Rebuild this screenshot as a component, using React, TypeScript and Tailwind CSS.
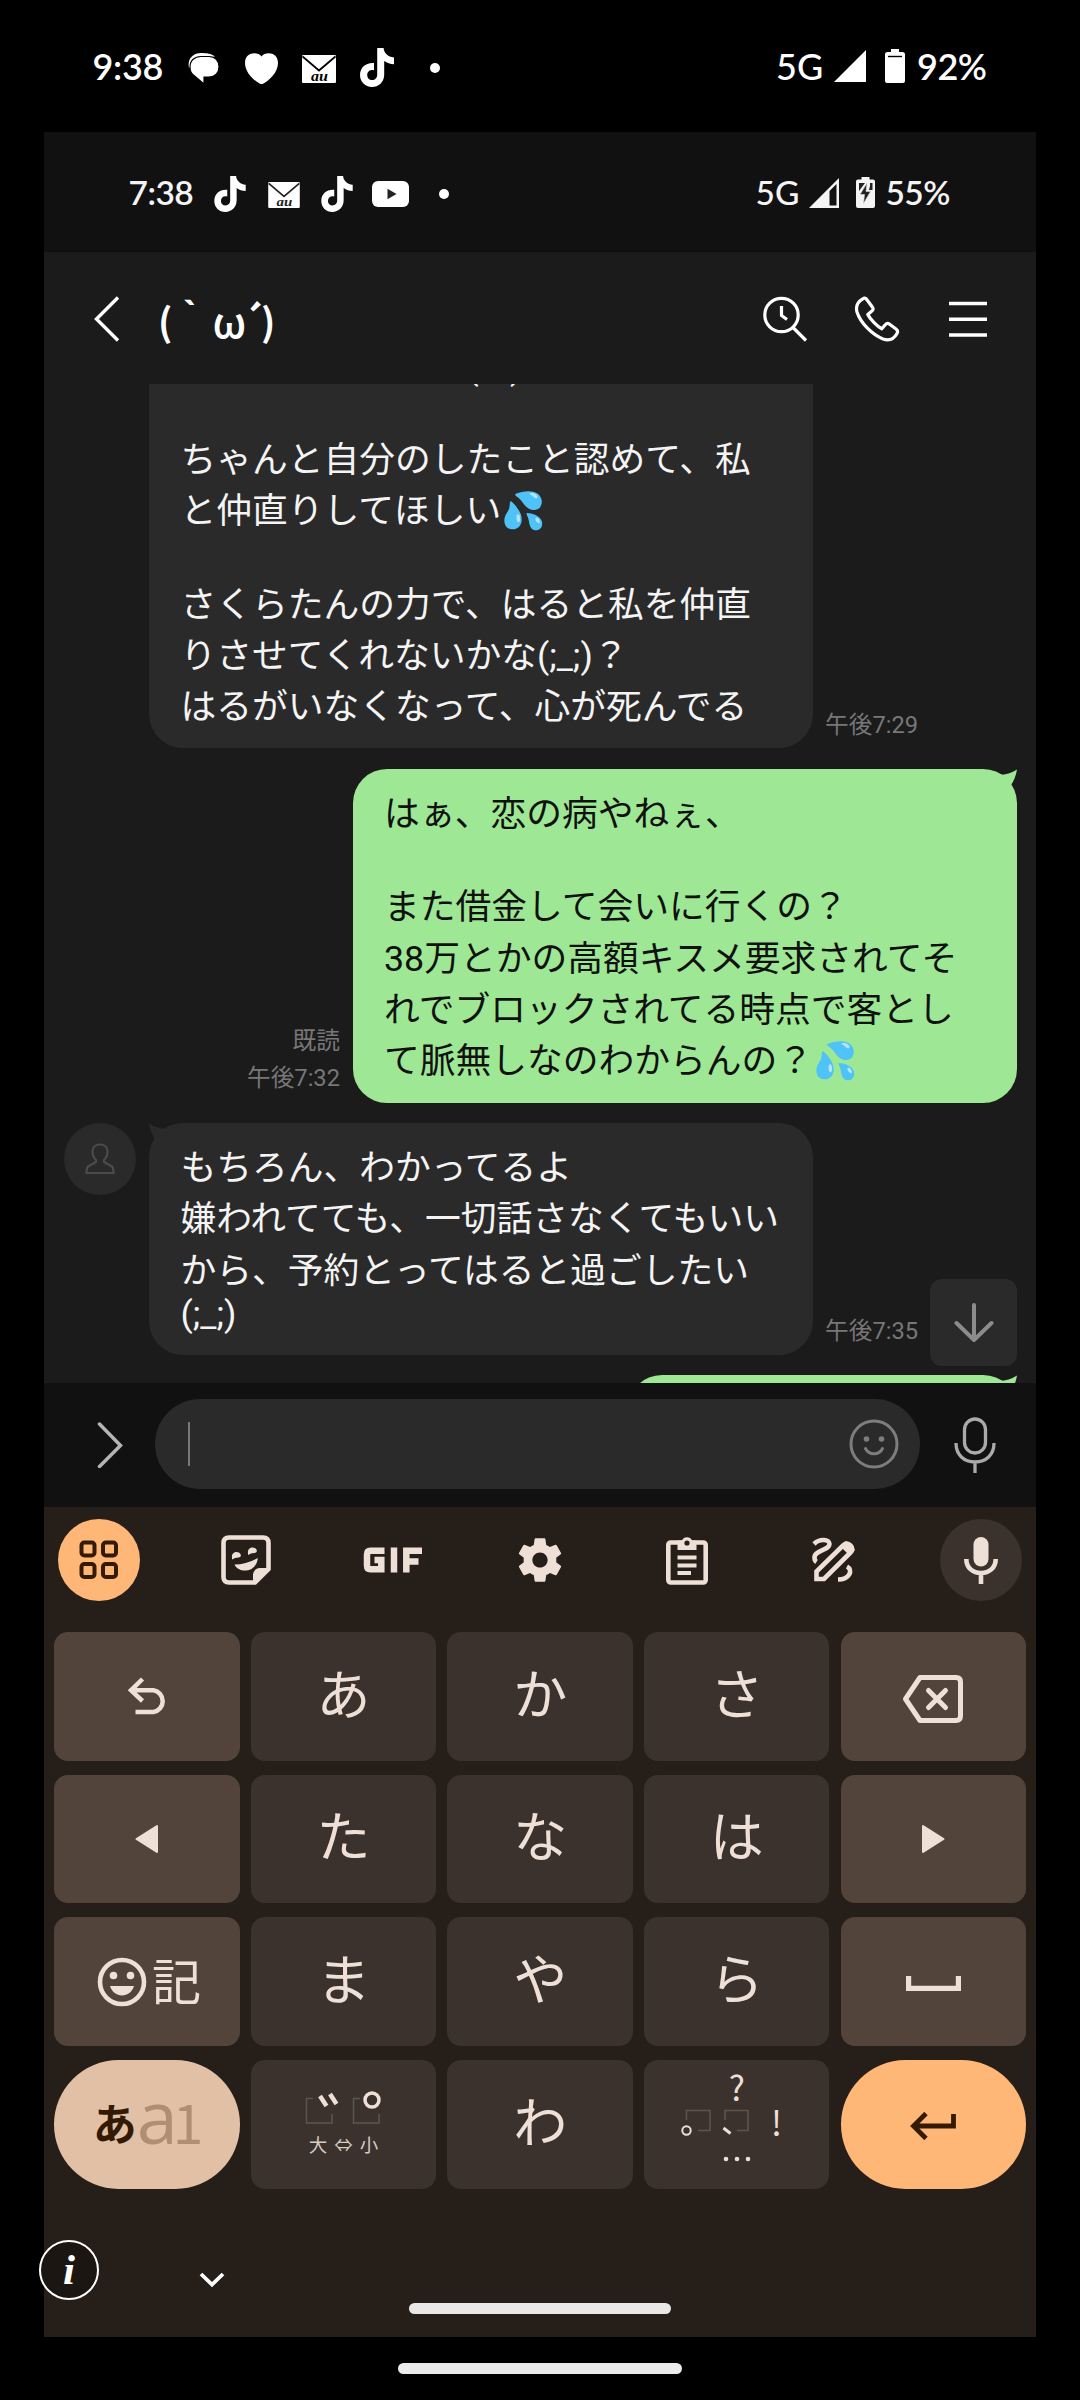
import React from "react";

type Box = { className?: string };

const TikTok = ({ className }: Box) => (
  <svg viewBox="0 0 34 39" className={className} fill="#fff">
    <path d="M17.2 0H23.6C24 4.8 27.6 9 34 9.4V16.2C30.2 16.2 27 15 24.2 13V26.4C24.2 34 18.6 39 12 39C5.200 39 0 33.800 0 27C0 19.400 6 14.300 14 15V22.200C10 21.200 7.200 23.600 7.200 27C7.200 30 9.400 32 12 32C15.200 32 17.200 29.800 17.200 26.400Z" />
  </svg>
);

const Mail = ({ className, line }: Box & { line: string }) => (
  <svg viewBox="0 0 34 28" className={className}>
    <rect width="34" height="28" rx="1.200" fill="#fff" />
    <path d="M0.500 1.500L17 15.500L33.500 1.500" fill="none" stroke={line} strokeWidth="1.800" />
    <text x="17.500" y="26" textAnchor="middle" fontSize="14" fontStyle="italic" fontWeight="700" fontFamily="Liberation Serif, serif" fill={line} textLength="17" lengthAdjust="spacingAndGlyphs">au</text>
  </svg>
);

function OuterStatus() {
  return (
    <div className="flex h-[132px] items-center font-[Lato,sans-serif] text-[36px] font-semibold text-white">
      <span className="ml-[92.500px] w-[72.500px] leading-[40px] tracking-[-0.3px]">9:38</span>
      <svg viewBox="0 0 32 31" className="ml-[23px] mt-[5px] h-[31px] w-[32px]">
        <path d="M1 15C-1 6 5 0 13 0C19 0 23 0.500 27 3.500L10 6Z" fill="#fff" />
        <path d="M13 3.500H21C27 3.500 31 7.500 31 13.800C31 20 27 24 21 24H16V31L6 22.500C3 20.500 2 17.500 2 14C2 7.500 6.500 3.500 13 3.500Z" fill="#fff" stroke="#000" strokeWidth="1.200" />
      </svg>
      <svg viewBox="0 0 33 31" className="ml-[24.500px] mt-[5px] h-[31px] w-[33px]" fill="#fff">
        <path d="M16.500 3.500C20-1.500 33-1.500 33 10C33 19.500 24 28 16.500 31.500C9 28 0 19.500 0 10C0-1.500 13-1.500 16.500 3.500Z" />
      </svg>
      <Mail line="#000" className="ml-[24.500px] mt-[6px] h-[28px] w-[34px]" />
      <TikTok className="ml-[24px] mt-[3px] h-[39px] w-[34px]" />
      <span className="ml-[36px] mt-[4px] size-[10px] rounded-full bg-white" />
      <span className="ml-[336px] w-[50px] font-medium leading-[40px]">5G</span>
      <svg viewBox="0 0 32 32" className="ml-[8px] h-[32px] w-[32px]" fill="#fff"><path d="M0 32L32 0V32Z" /></svg>
      <svg viewBox="0 0 20 34" className="ml-[19px] mt-[-1px] h-[34px] w-[20px]">
        <path d="M6 0H14V3H17.500A2.500 2.500 0 0 1 20 5.500V32A2 2 0 0 1 18 34H2A2 2 0 0 1 0 32V5.500A2.500 2.500 0 0 1 2.500 3H6Z" fill="#fff" />
        <path d="M3 7.500H17" stroke="#000" strokeWidth="1.400" />
      </svg>
      <span className="ml-[12px] leading-[40px] tracking-[-0.5px]">92%</span>
    </div>
  );
}

function InnerStatus() {
  return (
    <div className="flex h-[121px] items-center border-b border-[#181818] bg-[#111] font-[Lato,sans-serif] text-[33.500px] font-semibold text-[#f4f4f4]">
      <span className="ml-[84.500px] w-[66.500px] leading-[40px] tracking-[-0.5px]">7:38</span>
      <TikTok className="ml-[19px] mt-[3px] h-[36px] w-[32px]" />
      <Mail line="#222" className="ml-[22px] mt-[6px] h-[26px] w-[32px]" />
      <TikTok className="ml-[21px] mt-[3px] h-[36px] w-[32px]" />
      <svg viewBox="0 0 37 26" className="ml-[19px] mt-[4px] h-[26px] w-[37px]">
        <rect width="37" height="26" rx="6" fill="#fff" />
        <path d="M15.500 7.800L24.500 13L15.500 18.200Z" fill="#222" />
      </svg>
      <span className="ml-[30px] mt-[4px] size-[10px] rounded-full bg-white" />
      <span className="ml-[306.500px] w-[47px] font-medium leading-[40px]">5G</span>
      <svg viewBox="0 0 30 30" className="ml-[6px] mt-[2px] size-[30px]" fill="none">
        <path d="M0 30L30 0V30Z" fill="#f4f4f4" />
        <path d="M20.500 13L27.500 6V27.500H20.500Z" fill="#111" />
      </svg>
      <svg viewBox="0 0 19 31" className="ml-[17px] h-[31px] w-[19px]">
        <path d="M5.500 0H13.500V2.500H17A2 2 0 0 1 19 4.500V29A2 2 0 0 1 17 31H2A2 2 0 0 1 0 29V4.500A2 2 0 0 1 2 2.500H5.500Z" fill="#f4f4f4" />
        <path d="M3 6H9L3 14ZM14 6H16.500V13H13L14 9Z" fill="#222" />
        <path d="M11 6L4 17.500H8.500L7.500 26.500L14.500 14.500H10Z" fill="#222" stroke="#ddd" strokeWidth=".6" />
      </svg>
      <span className="ml-[11px] leading-[40px] tracking-[-0.6px]">55%</span>
    </div>
  );
}

function Header() {
  return (
    <header className="flex h-[131px] items-center bg-[#1b1b1b] text-white">
      <svg viewBox="0 0 26 46" className="ml-[50px] h-[46px] w-[26px]" fill="none" stroke="#fff" strokeWidth="3.400"><path d="M24 1.500L2.500 23L24 44.500" /></svg>
      <h1 className="ml-[38px] mt-[3px] flex w-[558px] whitespace-nowrap font-['Noto_Sans_CJK_JP',sans-serif] text-[38px] font-bold leading-[56px]">
        <span>(｀</span>
        <span className="ml-[2px] text-[42px] font-medium tracking-[-5px]">ω</span>
        <span className="tracking-[-4px]">´)</span>
      </h1>
      <svg viewBox="0 0 44 46" className="ml-[46px] size-[46px]" fill="none" stroke="#fff" strokeWidth="3.200">
        <circle cx="18.500" cy="19" r="16.700" />
        <path d="M18.500 10V19.500L24 23.500M29.500 31L43 44.500" />
      </svg>
      <svg viewBox="0 0 46 46" className="ml-[46px] size-[46px]" fill="none" stroke="#fff" strokeWidth="3.200" strokeLinejoin="round">
        <path d="M8.300 3.200C11 1.200 12 2.500 13.300 4.300L18.500 11.300C19.800 13.200 19.300 14 17.300 15.500L13.800 18.500C16 23 23 30.500 27.800 32.800L31.500 28.500C32.800 27 34 27 35.300 28L42 33C43.800 34.300 44 35.800 43 37.500C39.500 43.800 34.500 45 29 43C18 38.500 6.500 27 3 16C1.500 10.500 3 6.500 8.300 3.200Z" />
      </svg>
      <svg viewBox="0 0 38 38" className="ml-[49px] size-[38px]" stroke="#fff" strokeWidth="3.500"><path d="M0 3.500H38M0 19.300H38M0 35H38" /></svg>
    </header>
  );
}

const Line = ({ children, latin = false }: { children?: React.ReactNode; latin?: boolean }) => (
  <p className={latin ? "h-[42px] shrink-0 whitespace-nowrap leading-[35px]" : "h-[51.300px] shrink-0 whitespace-nowrap leading-[51.300px]"}>{children}</p>
);

const bubbleText = "font-[Roboto,'Noto_Sans_CJK_JP','Noto_Color_Emoji',sans-serif] text-[35.750px]";
const stamp = "whitespace-nowrap font-[Roboto,'Noto_Sans_CJK_JP',sans-serif] text-[23.700px] leading-[37px] text-[#777]";

const GreenTail = () => (
  <svg viewBox="0 0 24 24" className="absolute right-0 top-0 size-[24px]"><path d="M2 5.500Q14 7 24 0.500Q22.500 10 17 17.500L6 22Z" fill="#9ee895" /></svg>
);

function Chat() {
  return (
    <main className="relative flex h-[999px] flex-col overflow-hidden bg-[#1b1b1b]">
      <div className="ml-[105px] flex h-[364px] shrink-0 items-end">
        <div className={`${bubbleText} flex h-[364px] w-[664px] flex-col justify-end overflow-hidden rounded-b-[34px] bg-[#2a2a2a] pb-[14.500px] pl-[31.500px] text-[#f4f4f4]`}>
          <Line><span className="pl-[286px]">(;_;)</span></Line>
          <Line latin />
          <Line>ちゃんと自分のしたこと認めて、私</Line>
          <Line>と仲直りしてほしい💦</Line>
          <Line latin />
          <Line>さくらたんの力で、はると私を仲直</Line>
          <Line>りさせてくれないかな(;_;)？</Line>
          <Line>はるがいなくなって、心が死んでる</Line>
        </div>
        <span className={`${stamp} mb-[4px] ml-[12px]`}>午後7:29</span>
      </div>

      <div className="mr-[19px] mt-[21px] flex shrink-0 items-end justify-end">
        <div className={`${stamp} mb-[6px] mr-[12.500px] text-right`}><div>既読</div><div>午後7:32</div></div>
        <div className={`${bubbleText} relative h-[334px] w-[664.500px] rounded-[34px] bg-[#9ee895] pl-[31.500px] pt-[20px] text-[#111]`}>
          <GreenTail />
          <Line>はぁ、恋の病やねぇ、</Line>
          <Line latin />
          <Line>また借金して会いに行くの？</Line>
          <Line>38万とかの高額キスメ要求されてそ</Line>
          <Line>れでブロックされてる時点で客とし</Line>
          <Line>て脈無しなのわからんの？💦</Line>
        </div>
      </div>

      <div className="ml-[19.500px] mt-[20px] flex h-[231.500px] shrink-0">
        <span className="flex size-[72px] items-center justify-center rounded-full bg-[#2a2a2a]">
          <svg viewBox="0 0 30 32" className="h-[32px] w-[30px]" fill="none" stroke="#4c4c4c" strokeWidth="2.200" strokeLinejoin="round">
            <path d="M11 17C8 14 7.500 11 7.500 8.500C7.500 4.500 10.500 1.500 15 1.500S22.500 4.500 22.500 8.500C22.500 11 22 14 19 17V19L27 23.500C28.500 25 28.500 27 28.500 30H1.500C1.500 27 1.500 25 3 23.500L11 19Z" />
          </svg>
        </span>
        <div className={`${bubbleText} relative ml-[13.500px] w-[664px] rounded-[34px] bg-[#2a2a2a] pl-[31.500px] pt-[20px] text-[#f4f4f4]`}>
          <svg viewBox="0 0 24 24" className="absolute left-0 top-0 size-[24px]"><path d="M22 5.500Q10 7 0 0.500Q1.500 10 7 17.500L18 22Z" fill="#2a2a2a" /></svg>
          <Line>もちろん、わかってるよ</Line>
          <Line>嫌われてても、一切話さなくてもいい</Line>
          <Line>から、予約とってはると過ごしたい</Line>
          <Line latin>(;_;)</Line>
        </div>
        <span className={`${stamp} mb-[5px] ml-[12px] self-end`}>午後7:35</span>
      </div>

      <div className="relative ml-[584px] mt-[20.500px] h-[80px] w-[389px] shrink-0 rounded-[34px] bg-[#9ee895]"><GreenTail /></div>

      <button className="absolute bottom-[17px] right-[19px] flex size-[87px] items-center justify-center rounded-[12px] bg-[#2a2a2a]">
        <svg viewBox="0 0 40 40" className="size-[40px]" fill="none" stroke="#8c8c8c" strokeWidth="4" strokeLinecap="round" strokeLinejoin="round"><path d="M20 2V37M2.500 20L20 37L37.500 20" /></svg>
      </button>
    </main>
  );
}

function InputBar() {
  return (
    <div className="flex h-[123.500px] items-center bg-[#111]">
      <svg viewBox="0 0 26 46" className="ml-[53px] h-[46px] w-[26px]" fill="none" stroke="#b4b4b4" strokeWidth="3.500" strokeLinecap="round"><path d="M2.500 2L23.500 23.500L2.500 44.500" /></svg>
      <div className="ml-[32px] mt-[-2px] flex h-[90px] w-[764.500px] items-center rounded-full bg-[#2a2a2a] pl-[33px] pr-[21px]">
        <span className="h-[44px] w-[2px] bg-[#777]" />
        <svg viewBox="0 0 50 50" className="ml-auto size-[50px]" fill="none" stroke="#7d7d7d" strokeWidth="3" strokeLinecap="round">
          <circle cx="25" cy="25" r="23" /><path d="M16.500 29.500C20 36.500 30 36.500 33.500 29.500" />
          <g fill="#7d7d7d" stroke="none"><circle cx="17.500" cy="20" r="2.800" /><circle cx="32.500" cy="20" r="2.800" /></g>
        </svg>
      </div>
      <svg viewBox="0 0 42 56" className="ml-[34.500px] h-[56px] w-[42px]" fill="none" stroke="#aaa" strokeWidth="3.300">
        <rect x="10.500" y="2" width="21" height="34" rx="10.500" />
        <path d="M2 26C2 38 10 45 21 45S40 38 40 26M21 45V56" />
      </svg>
    </div>
  );
}

const ink = "#efe0d7";

function Toolbar() {
  return (
    <div className="flex h-[82px] items-center justify-between pl-[13.500px] pr-[14.500px]">
      <span className="flex size-[82px] items-center justify-center rounded-full bg-[#ffb777]">
        <svg viewBox="0 0 40 40" className="size-[40px]" fill="none" stroke="#351a02" strokeWidth="4">
          <rect x="2.500" y="2.500" width="13" height="13" rx="2.800" /><rect x="24" y="2.500" width="13" height="13" rx="2.800" />
          <rect x="2.500" y="24" width="13" height="13" rx="2.800" /><rect x="24" y="24" width="13" height="13" rx="2.800" />
        </svg>
      </span>
      <span className="flex size-[82px] items-center justify-center">
        <svg viewBox="0 0 50 50" className="size-[50px]" fill={ink}>
          <path d="M8 2.500H42Q47.500 2.500 47.500 8V34L34 47.500H8Q2.500 47.500 2.500 42V8Q2.500 2.500 8 2.500Z" fill="none" stroke={ink} strokeWidth="4.600" />
          <path d="M32 48V39Q33 33.500 39 33H48L35 48Z" />
          <path d="M11 22.500A4.600 4.600 0 0 1 20 20.500Q19.500 22.300 17.500 22.500Q14 22.500 11 24.500ZM27 18A4.600 4.600 0 0 1 36 16Q35.500 18 33 18Q30 18 27 20Z" />
          <path d="M13.500 29.500Q26 29.500 36.800 23C36.500 30 31 35 25.500 35.500C20.500 36 15.500 34 13.500 29.500Z" />
        </svg>
      </span>
      <span className="flex size-[82px] items-center justify-center">
        <svg viewBox="0 0 60 26" className="h-[26px] w-[60px]" fill="none" stroke={ink} strokeWidth="6.500">
          <path d="M21.500 3.800H7.500Q4 3.800 4 7.500V18.500Q4 22.300 7.500 22.300H18.300V13H11.500" /><path d="M31 0.500V25.500" /><path d="M59 3.800H43.300V25.500M43.300 14.500H55.500" />
        </svg>
      </span>
      <span className="flex size-[82px] items-center justify-center">
        <svg viewBox="1.900 2 20.200 20" className="size-[44px]" fill={ink}>
          <path d="M19.430 12.980c.04-.32.07-.64.07-.98s-.03-.66-.07-.98l2.110-1.650c.19-.15.24-.42.12-.64l-2-3.460c-.12-.22-.39-.3-.61-.22l-2.490 1c-.52-.4-1.080-.73-1.690-.98l-.38-2.650C14.460 2.180 14.250 2 14 2h-4c-.25 0-.46.18-.49.42l-.38 2.650c-.61.25-1.170.59-1.690.98l-2.490-1c-.23-.09-.49 0-.61.22l-2 3.460c-.13.22-.07.49.12.64l2.110 1.650c-.04.32-.07.65-.07.98s.03.66.07.98l-2.110 1.650c-.19.15-.24.42-.12.64l2 3.460c.12.22.39.3.61.22l2.490-1c.52.4 1.080.73 1.690.98l.38 2.650c.03.24.24.42.49.42h4c.25 0 .46-.18.49-.42l.38-2.650c.61-.25 1.170-.59 1.690-.98l2.490 1c.23.09.49 0 .61-.22l2-3.460c.12-.22.07-.49-.12-.64l-2.110-1.650zM12 15.500c-1.930 0-3.500-1.570-3.500-3.500s1.570-3.500 3.500-3.500 3.500 1.570 3.500 3.500-1.570 3.500-3.500 3.500z" />
        </svg>
      </span>
      <span className="flex size-[82px] items-center justify-center">
        <svg viewBox="0 0 42 50" className="h-[50px] w-[42px]" fill="none" stroke={ink} strokeWidth="4.600">
          <rect x="2.300" y="7.500" width="37.400" height="40" rx="2.500" />
          <path d="M11.500 22.500H30.500M11.500 30.500H30.500M11.500 38H25" strokeWidth="4" />
          <path d="M11.500 5.500H16A5.500 5.500 0 0 1 26 5.500H30.500V15H11.500Z" fill={ink} stroke="none" />
          <circle cx="21" cy="8" r="2.600" fill="#261e19" stroke="none" />
        </svg>
      </span>
      <span className="flex size-[82px] items-center justify-center">
        <svg viewBox="0 0 44 46" className="h-[46px] w-[44px]" fill="none" stroke={ink} strokeWidth="4.600">
          <path d="M2 7C8 1 17.500 2.500 17.500 7C17.500 13 2.500 13.500 2.500 20.500C2.500 22.500 3 24 4.500 25" />
          <path d="M4.500 42V34.500L31 8.500Q35 5 38.500 8.500Q42 12 38.500 15.500L12 42Z" />
          <path d="M28 9L34 4L43 13L37.500 18.500Z" fill={ink} stroke="none" />
          <path d="M35 29.500C41.500 33 37.500 42.500 26 42.500" />
        </svg>
      </span>
      <span className="flex size-[82px] items-center justify-center rounded-full bg-[#3b322d]">
        <svg viewBox="0 0 34 48" className="h-[48px] w-[34px]" fill="none" stroke={ink} strokeWidth="4.600">
          <rect x="9.500" y="1" width="15" height="29.500" rx="7.500" fill={ink} stroke="none" />
          <path d="M2.300 23C2.300 32 9 37 17 37S31.700 32 31.700 23M17 37V48" />
        </svg>
      </span>
    </div>
  );
}

const keyBase = "flex items-center justify-center font-['Noto_Sans_CJK_JP',sans-serif]";

const Kana = ({ children }: { children: string }) => (
  <button className={`${keyBase} rounded-[14px] bg-[#3b322d] pb-[9px] text-[54px] leading-[60px] text-[#efe0d7]`}>{children}</button>
);
const Fn = ({ children }: { children: React.ReactNode }) => (
  <button className={`${keyBase} rounded-[14px] bg-[#52443a] text-[#efe0d7]`}>{children}</button>
);

function Keys() {
  return (
    <div className="ml-[10.300px] mt-[31.500px] grid h-[556.500px] w-[971.700px] grid-cols-5 grid-rows-4 gap-x-[11.100px] gap-y-[13.800px]">
      <Fn>
        <svg viewBox="0 0 40 38" className="ml-[2px] mt-[-1px] h-[38px] w-[40px]" fill="none" stroke={ink} strokeWidth="4.500">
          <path d="M14.500 2L3 13.300L14.500 24M3.500 13.300H25.500A11 11 0 0 1 25.500 35H7.500" />
        </svg>
      </Fn>
      <Kana>あ</Kana><Kana>か</Kana><Kana>さ</Kana>
      <Fn>
        <svg viewBox="0 0 62 50" className="mr-[1px] mt-[5px] h-[50px] w-[62px]" fill="none" stroke={ink} strokeWidth="5" strokeLinejoin="round">
          <path d="M18 3.500H54Q58.500 3.500 58.500 8V42Q58.500 46.500 54 46.500H18L3.500 25Z" /><path d="M26.500 16.500L43.500 33.500M43.500 16.500L26.500 33.500" strokeLinecap="round" />
        </svg>
      </Fn>

      <Fn><svg viewBox="0 0 24 30" className="h-[30px] w-[24px]" fill={ink} stroke={ink} strokeWidth="2" strokeLinejoin="round"><path d="M1.500 15L22 2V28Z" /></svg></Fn>
      <Kana>た</Kana><Kana>な</Kana><Kana>は</Kana>
      <Fn><svg viewBox="0 0 24 30" className="mr-[1px] h-[30px] w-[24px]" fill={ink} stroke={ink} strokeWidth="2" strokeLinejoin="round"><path d="M22.500 15L2 2V28Z" /></svg></Fn>

      <Fn>
        <svg viewBox="0 0 50 50" className="ml-[4px] mr-[5px] size-[50px]" fill={ink}>
          <circle cx="25" cy="25" r="22" fill="none" stroke={ink} strokeWidth="4.600" />
          <circle cx="16.500" cy="18.500" r="3.800" /><circle cx="33.500" cy="18.500" r="3.800" /><path d="M13 29H37C35 35 30.500 38.500 25 38.500S15 35 13 29Z" />
        </svg>
        <span className="pb-[6px] text-[49px] leading-[56px]">記</span>
      </Fn>
      <Kana>ま</Kana><Kana>や</Kana><Kana>ら</Kana>
      <Fn><svg viewBox="0 0 55 15" className="mt-[3px] h-[15px] w-[55px]" fill="none" stroke={ink} strokeWidth="5.200"><path d="M2.600 0V12.300H52.400V0" /></svg></Fn>

      <button className={`${keyBase} rounded-full bg-[#e2c0a6]`}>
        <span className="ml-[2px] pb-[5px] text-[44px] font-bold leading-[60px] text-[#321a04]">あ</span>
        <span className="flex h-[60px] items-baseline pb-[5px] text-[#b08e74]">
          <span className="font-['Open_Sans',sans-serif] text-[74px] leading-[44px] tracking-[-5px]">a</span>
          <span className="text-[55px] leading-[44px]">1</span>
        </span>
      </button>
      <button className={`${keyBase} flex-col rounded-[14px] bg-[#3b322d]`}>
        <svg viewBox="0 0 76 34" className="mr-[1px] mt-[-4px] h-[34px] w-[76px]" fill="none">
          <path d="M8 8.500H1.500V34M1.500 33H27V24M55 8.500H48.500V34M48.500 33H74V24" stroke="#5f554f" strokeWidth="1.500" />
          <path d="M15 6L21.500 16M25 4L31.500 14" stroke={ink} strokeWidth="4.500" /><circle cx="67" cy="10" r="7" stroke={ink} strokeWidth="3.500" />
        </svg>
        <span className="mt-[10px] flex gap-[7px] text-[18.500px] leading-[20px] text-[#d8cbc3]"><span>大</span><span>⇔</span><span>小</span></span>
      </button>
      <Kana>わ</Kana>
      <button className={`${keyBase} flex-col rounded-[14px] bg-[#3b322d] text-[#efe0d7]`}>
        <span className="mt-[-14px] text-[34px] leading-[30px]">?</span>
        <span className="mt-[5px] flex w-[113.400px] items-center">
          <svg viewBox="0 0 70 30" className="h-[30px] w-[70px]" fill="none">
            <path d="M6.500 11V1.500H30V21.500H18M45 11V1.500H68V21.500H57" stroke="#5f554f" strokeWidth="1.500" />
            <circle cx="6.500" cy="21.500" r="4.200" stroke={ink} strokeWidth="2" /><path d="M43.500 19L50.500 24.500" stroke={ink} strokeWidth="3" />
          </svg>
          <span className="ml-[16.500px] w-[20px] pb-[4px] text-center text-[34px] leading-[30px]">!</span>
        </span>
        <svg viewBox="0 0 28 6" className="mt-[15px] h-[6px] w-[28px]" fill={ink}><circle cx="3" cy="3" r="2.300" /><circle cx="14" cy="3" r="2.300" /><circle cx="25" cy="3" r="2.300" /></svg>
      </button>
      <button className={`${keyBase} rounded-full bg-[#ffb777]`}>
        <svg viewBox="0 0 46 28" className="mr-[1px] mt-[3px] h-[28px] w-[46px]" fill="none" stroke="#351a02" strokeWidth="4.800"><path d="M16 1.500L3.500 14L16 26.500M4 14H43.500V2" /></svg>
      </button>
    </div>
  );
}

export default function App() {
  return (
    <div className="relative h-[2400px] w-[1080px] overflow-hidden bg-black">
      <OuterStatus />
      <section className="mx-auto flex h-[2205px] w-[992px] flex-col">
        <InnerStatus />
        <Header />
        <Chat />
        <InputBar />
        <div className="flex flex-1 flex-col bg-[#261e19] pt-[12px]">
          <Toolbar />
          <Keys />
          <div className="flex flex-1 flex-col">
            <svg viewBox="0 0 26 16" className="ml-[155px] mt-[83px] h-[16px] w-[26px]" fill="none" stroke="#fff" strokeWidth="3.800"><path d="M2 2L13 12.500L24 2" /></svg>
            <span className="mt-[15px] h-[11px] w-[262px] self-center rounded-full bg-[#ebe7e6]" />
          </div>
        </div>
      </section>
      <div className="mx-auto mt-[26px] h-[11px] w-[284px] rounded-full bg-[#ebebeb]" />
      <span className="absolute left-[39px] top-[2240px] flex size-[60px] items-center justify-center rounded-full border-[2.500px] border-white bg-[#1c1613] pb-[2px] font-['Liberation_Serif',serif] text-[43px] font-bold italic leading-none text-white">i</span>
    </div>
  );
}
